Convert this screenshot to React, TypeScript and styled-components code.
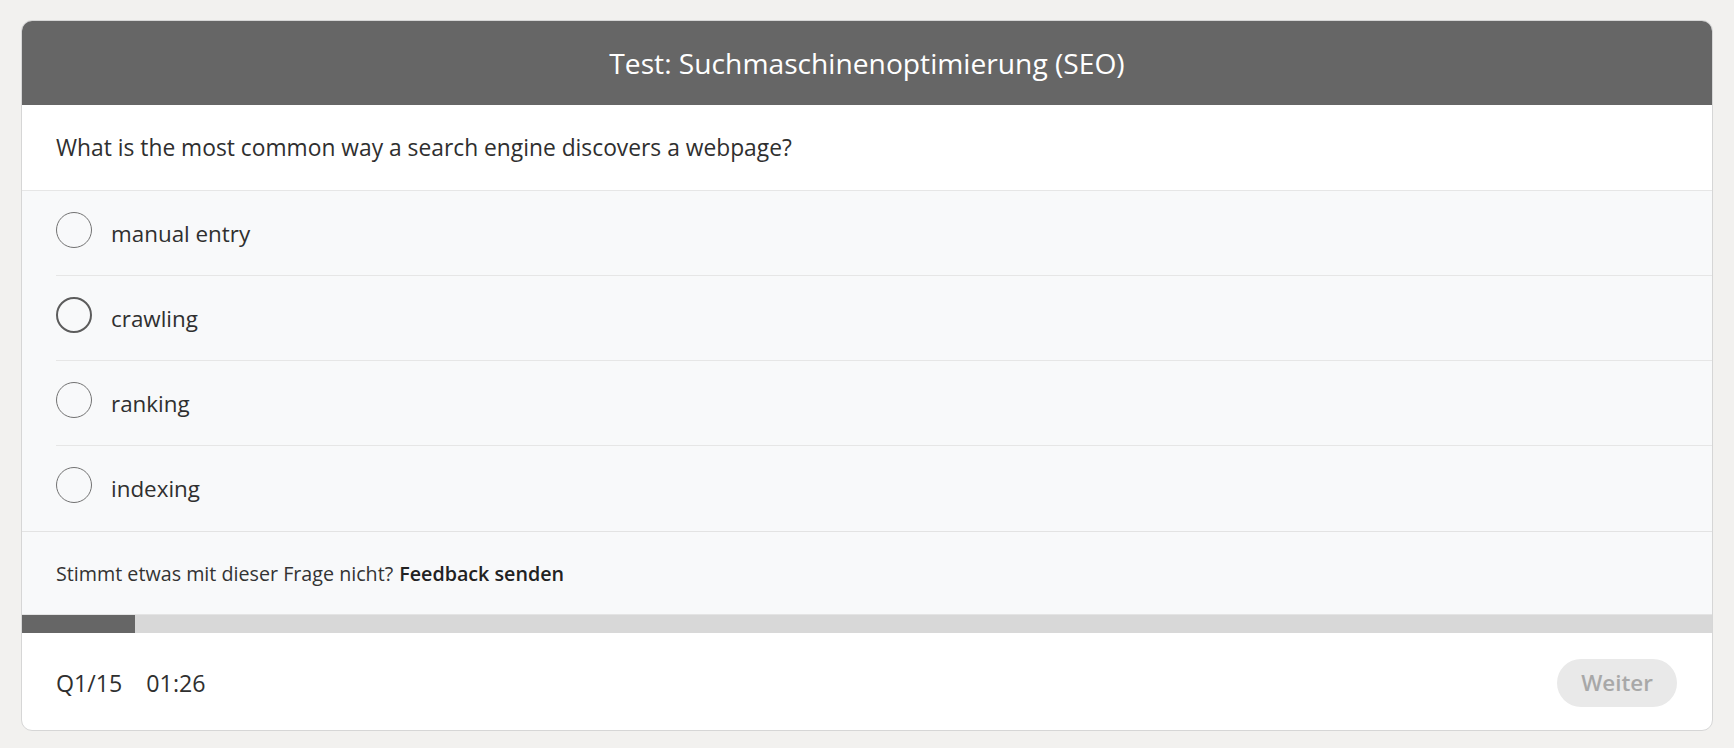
import React from "react";
import styled, { createGlobalStyle } from "styled-components";

const GlobalStyle = createGlobalStyle`
  body {
    margin: 0;
    background: #f2f1ef;
    font-family: "Open Sans", "Noto Sans", sans-serif;
    color: #2f2f2f;
  }
`;

const Page = styled.div`
  padding: 20px 21px 18px;
`;

const Card = styled.section`
  background: #ffffff;
  border: 1px solid #d6d6d6;
  border-radius: 11px;
  overflow: hidden;
`;

const Header = styled.header`
  height: 84px;
  display: flex;
  align-items: center;
  justify-content: center;
  background: #666666;
  color: #ffffff;
  font-size: 28.2px;
`;

const Question = styled.div`
  height: 85px;
  display: flex;
  align-items: center;
  padding: 0 34px;
  font-size: 22.8px;
  border-bottom: 1px solid #e6e6e6;
`;

const OptionList = styled.ul`
  list-style: none;
  margin: 0;
  padding: 0 0 0 34px;
  background: #f8f9fa;
  border-bottom: 1px solid #e3e3e3;
`;

const Option = styled.li`
  height: 85px;
  box-sizing: border-box;
  display: flex;
  align-items: center;
  gap: 19px;
  font-size: 22.4px;
  border-bottom: 1px solid #e6e6e6;

  &:last-child {
    border-bottom: none;
  }
`;

const Radio = styled.span<{ $active?: boolean }>`
  width: 36px;
  height: 36px;
  box-sizing: border-box;
  border-radius: 50%;
  border: ${({ $active }) => ($active ? "2.5px solid #5c5c5c" : "1.5px solid #727272")};
  margin-bottom: 7px;
  flex-shrink: 0;
`;

const Feedback = styled.div`
  height: 82px;
  display: flex;
  align-items: center;
  padding: 0 34px;
  background: #f8f9fa;
  font-size: 19.7px;
  color: #333333;

  b {
    font-weight: 600;
    color: #222222;
    margin-left: 6px;
  }
`;

const Progress = styled.div`
  height: 18px;
  background: #d8d8d8;
  border-top: 1px solid #e4e4e4;
`;

const ProgressFill = styled.div`
  height: 100%;
  background: #666666;
`;

const Footer = styled.footer`
  height: 97px;
  display: flex;
  align-items: center;
  justify-content: space-between;
  padding: 2px 35px 0 34px;
  box-sizing: border-box;
  font-size: 23.2px;
`;

const Meta = styled.div`
  display: flex;
  gap: 24px;
`;

const NextButton = styled.button`
  width: 120px;
  height: 48px;
  border: none;
  border-radius: 24px;
  background: #e9e9e9;
  color: #a8a8a8;
  font-family: inherit;
  font-size: 22.4px;
  font-weight: 600;
`;

const answers = ["manual entry", "crawling", "ranking", "indexing"];

export default function App() {
  const current = 1;
  const total = 15;
  return (
    <>
      <GlobalStyle />
      <Page>
        <Card>
          <Header>Test: Suchmaschinenoptimierung (SEO)</Header>
          <Question>What is the most common way a search engine discovers a webpage?</Question>
          <OptionList>
            {answers.map((a) => (
              <Option key={a}>
                <Radio $active={a === "crawling"} />
                {a}
              </Option>
            ))}
          </OptionList>
          <Feedback>
            Stimmt etwas mit dieser Frage nicht?<b>Feedback senden</b>
          </Feedback>
          <Progress>
            <ProgressFill style={{ width: `${(current / total) * 100}%` }} />
          </Progress>
          <Footer>
            <Meta>
              <span>Q{current}/{total}</span>
              <span>01:26</span>
            </Meta>
            <NextButton disabled>Weiter</NextButton>
          </Footer>
        </Card>
      </Page>
    </>
  );
}
